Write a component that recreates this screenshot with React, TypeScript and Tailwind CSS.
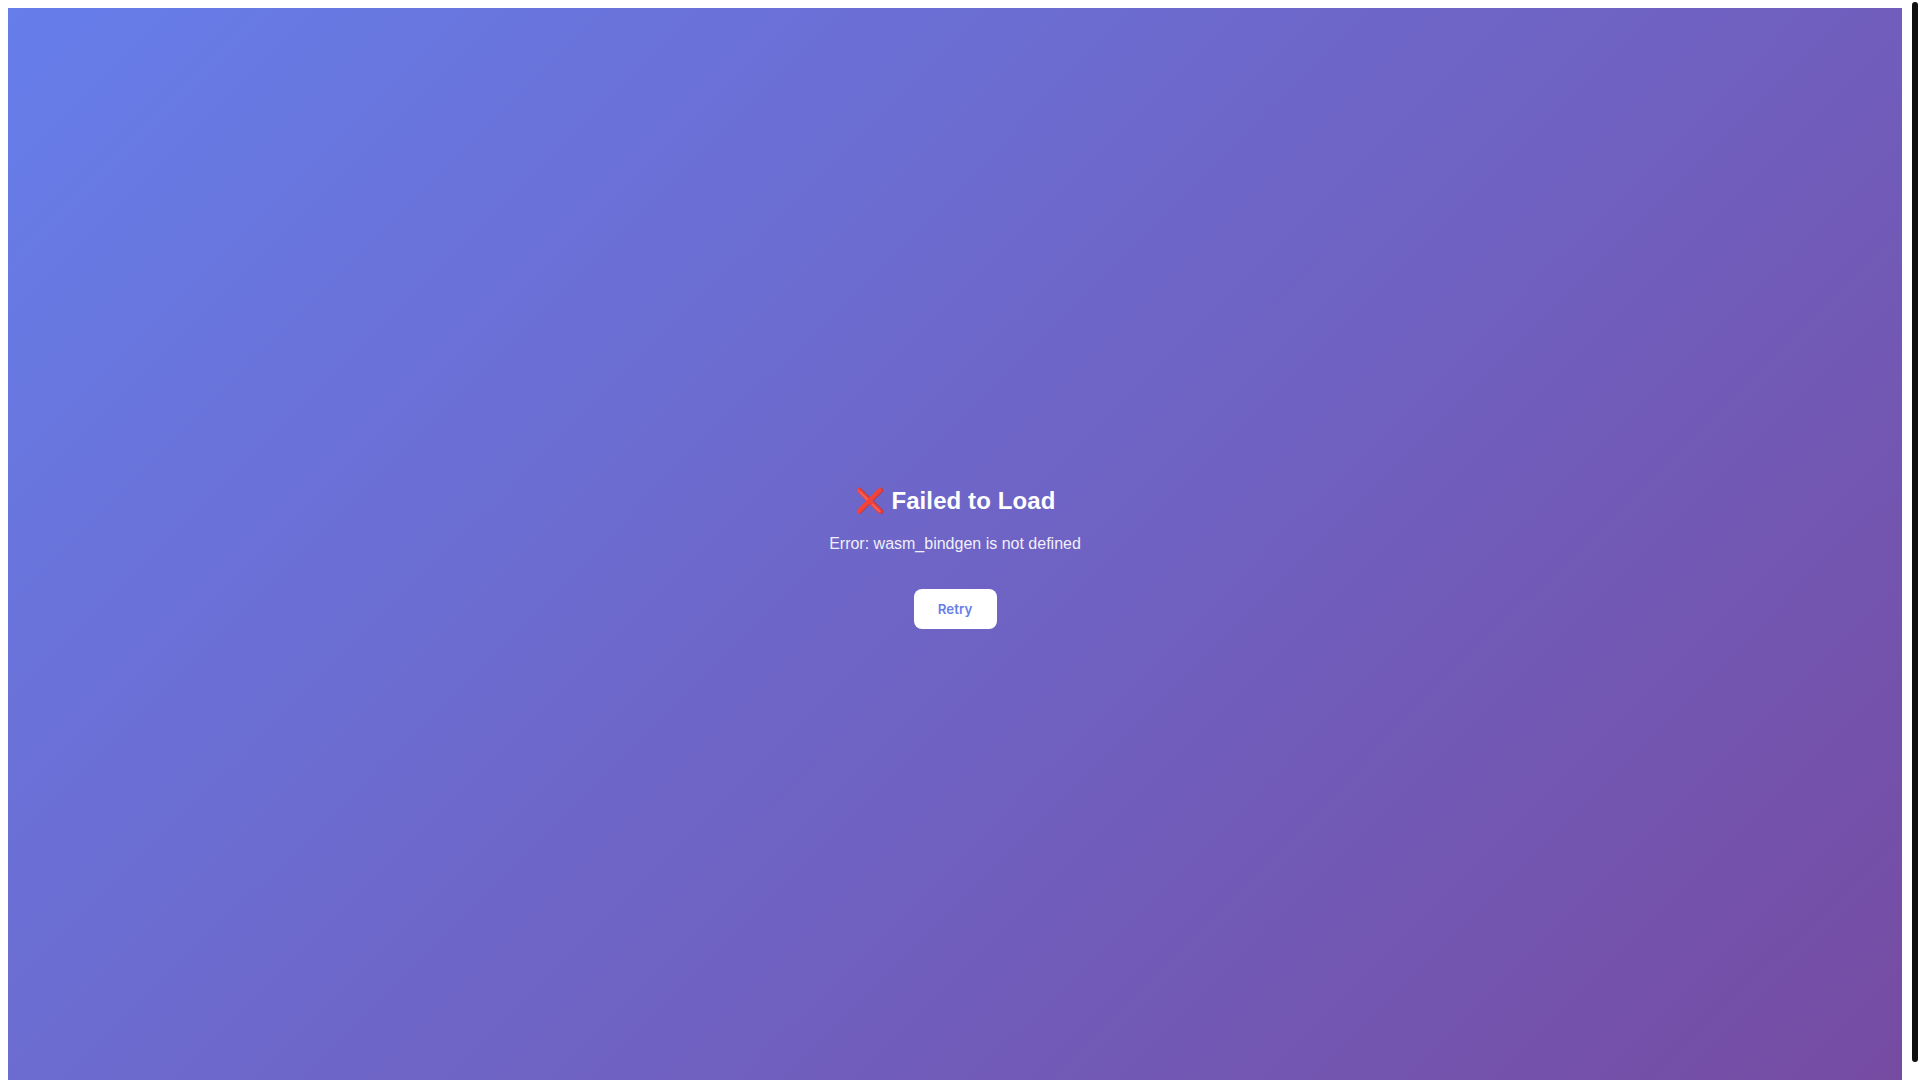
export default function App() {
  return (
    <div className="flex h-screen items-start overflow-hidden bg-white font-['Inter',sans-serif]">
      <div className="w-[1902px] shrink-0 pl-2 pt-2">
        <div className="flex h-[1080px] flex-col items-center justify-center bg-[linear-gradient(135deg,#667eea_0%,#764ba2_100%)] text-center text-white">
          <h2 className="mb-5 mt-5 font-['Liberation_Sans',sans-serif] text-2xl font-bold leading-[28px] tracking-[0.1px]">❌ Failed to Load</h2>
          <p className="mb-9 font-['Liberation_Sans',sans-serif] text-base leading-[18px] opacity-90">Error: wasm_bindgen is not defined</p>
          <button className="h-10 w-[83px] rounded-lg bg-white pt-px text-[13.33px] font-semibold text-[#667eea]">Retry</button>
        </div>
      </div>
      <div className="ml-2.5 mt-0.5 h-[1060px] w-1.5 shrink-0 rounded-full bg-[#111]" />
    </div>
  );
}
